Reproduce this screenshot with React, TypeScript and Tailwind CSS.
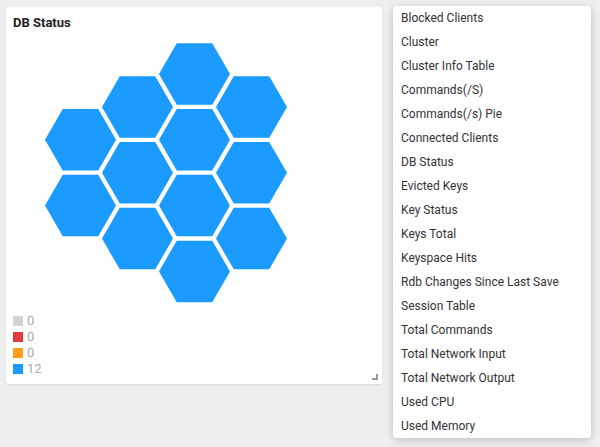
import React from "react";

const items = [
  "Blocked Clients",
  "Cluster",
  "Cluster Info Table",
  "Commands(/S)",
  "Commands(/s) Pie",
  "Connected Clients",
  "DB Status",
  "Evicted Keys",
  "Key Status",
  "Keys Total",
  "Keyspace Hits",
  "Rdb Changes Since Last Save",
  "Session Table",
  "Total Commands",
  "Total Network Input",
  "Total Network Output",
  "Used CPU",
  "Used Memory",
];

function hexPoints(cx: number, cy: number, r: number) {
  const pts: string[] = [];
  for (let i = 0; i < 6; i++) {
    const a = (Math.PI / 3) * i;
    pts.push(`${(cx + r * Math.cos(a)).toFixed(2)},${(cy + r * Math.sin(a)).toFixed(2)}`);
  }
  return pts.join(" ");
}

const hexes: [number, number][] = [];
const xs = [80.5, 137.5, 194.5, 251.5];
const step = 65.8;
for (let j = 0; j < 2; j++) hexes.push([xs[0], 139.8 + step * j]);
for (let j = 0; j < 3; j++) hexes.push([xs[1], 107 + step * j]);
for (let j = 0; j < 4; j++) hexes.push([xs[2], 74 + step * j]);
for (let j = 0; j < 3; j++) hexes.push([xs[3], 107 + step * j]);

const legend = [
  { c: "bg-[#d3d3d3]", v: "0" },
  { c: "bg-[#e2393e]", v: "0" },
  { c: "bg-[#ff9c1a]", v: "0" },
  { c: "bg-[#1b9bff]", v: "12" },
];

export default function App() {
  return (
    <div
      className="relative w-[600px] h-[447px] bg-[#eeeeee] overflow-hidden pl-[6px] pt-[7px]"
      style={{ fontFamily: "Roboto, 'Liberation Sans', sans-serif" }}
    >
      <div className="relative w-[376px] h-[377px] bg-white rounded-[3px] shadow-[0_1px_2px_rgba(0,0,0,0.08)] flex flex-col">
        <div className="pl-[7px] pt-[8px] h-[24px] text-[13px] font-bold text-[#222] leading-[16px]">DB Status</div>
        <svg className="shrink-0" width="376" height="282" viewBox="6 31 376 282">
          {hexes.map(([x, y], i) => (
            <polygon key={i} points={hexPoints(x, y, 35.5)} fill="#1b9bff" />
          ))}
        </svg>
        <div className="pl-[7px] flex flex-col">
          {legend.map((l, i) => (
            <div key={i} className="flex items-center h-[16px]">
              <div className={`w-[10px] h-[10px] ${l.c}`} />
              <span className="ml-[4px] text-[13px] text-[#aaaaaa] leading-[16px]">{l.v}</span>
            </div>
          ))}
        </div>
        <div className="absolute right-[4px] bottom-[4px] w-[6px] h-[6px] border-r-2 border-b-2 border-[#999]" />
      </div>
      <div className="absolute left-[393px] top-[6px] w-[198px] bg-white rounded-[4px] shadow-[0_2px_8px_rgba(0,0,0,0.2)] flex flex-col">
        {items.map((t) => (
          <div key={t} className="h-[24px] flex items-center pl-[8px] text-[12px] text-[#333]">
            {t}
          </div>
        ))}
      </div>
    </div>
  );
}
